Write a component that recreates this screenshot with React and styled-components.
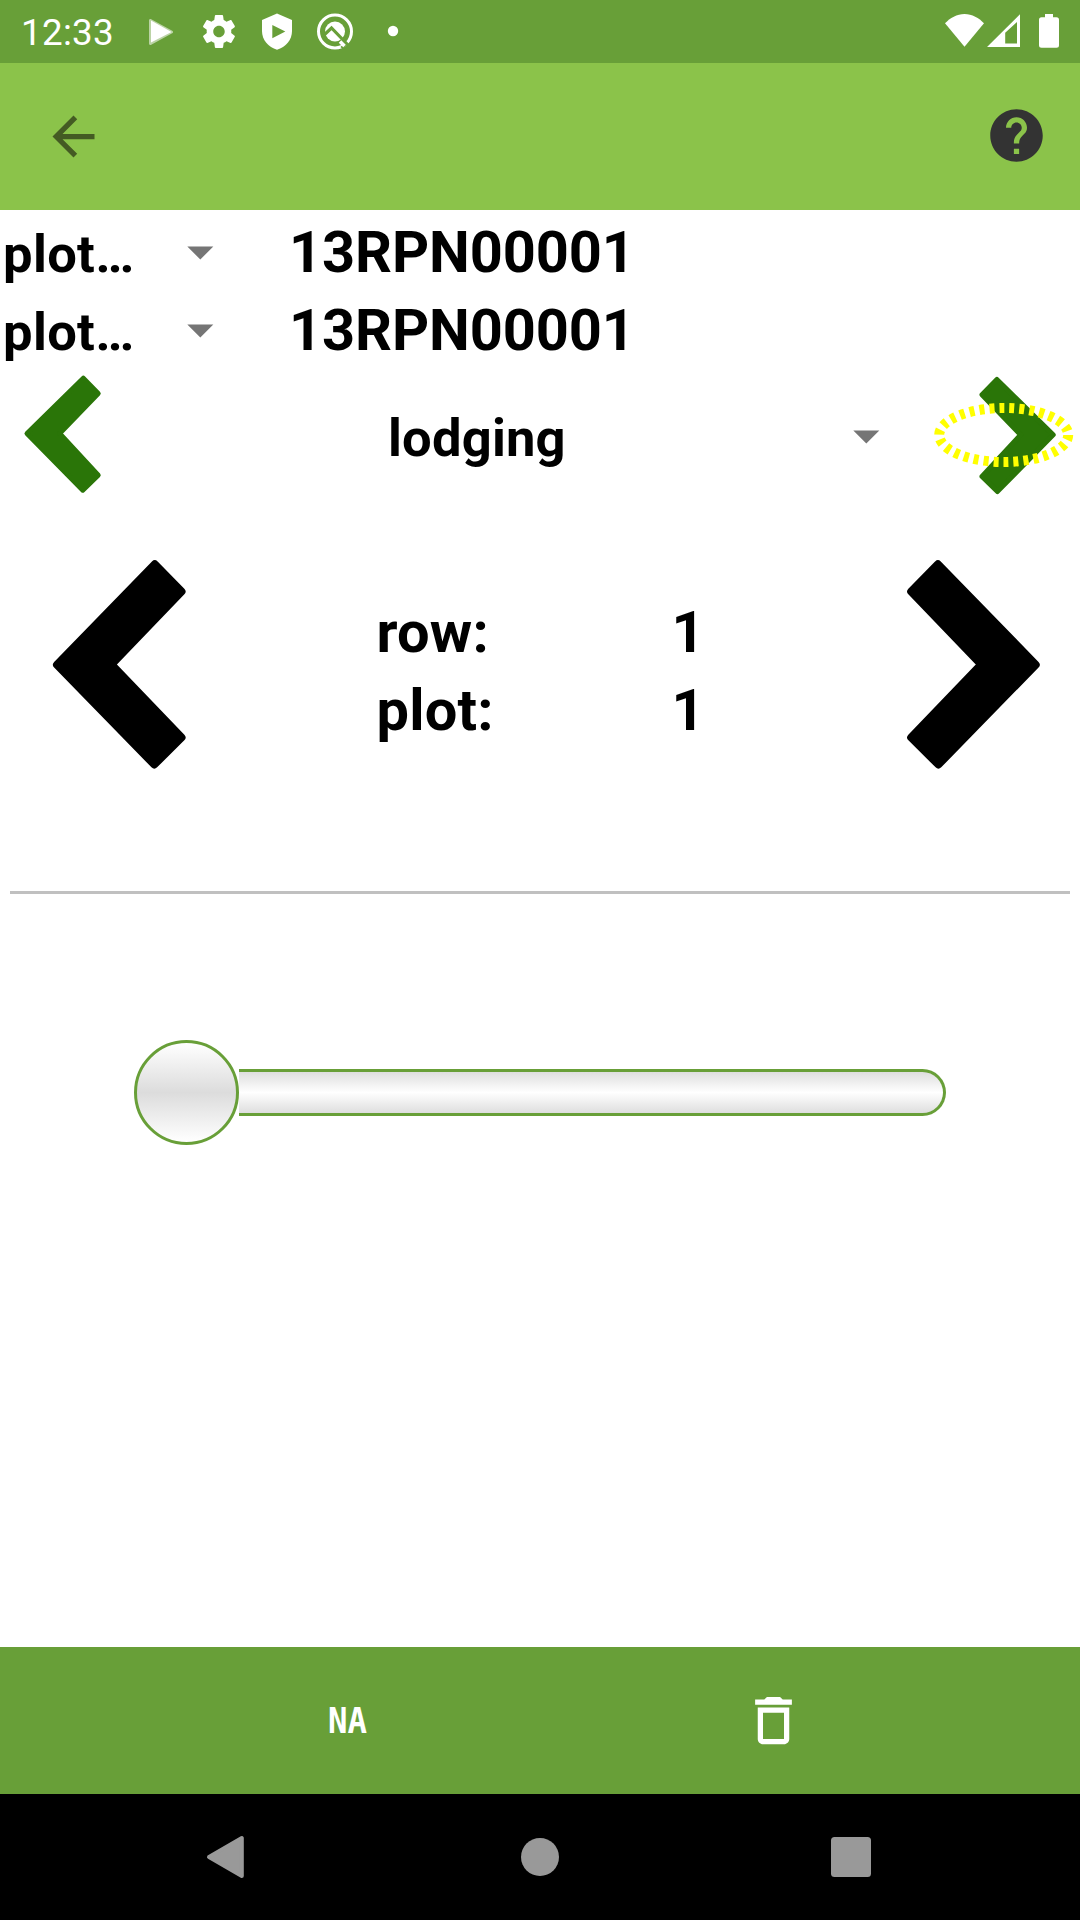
import React from "react";
import styled, { createGlobalStyle } from "styled-components";

const GlobalStyle = createGlobalStyle`
  * { box-sizing: border-box; }
  html, body { margin: 0; background: #fff; }
  svg { display: block; flex: none; }
`;

const Screen = styled.div`
  width: 1080px;
  height: 1920px;
  display: flex;
  flex-direction: column;
  background: #fff;
  color: #000;
  font-family: Roboto, "Liberation Sans", sans-serif;
  overflow: hidden;
`;

const StatusBar = styled.header`
  height: 63px;
  flex: none;
  display: flex;
  align-items: center;
  justify-content: space-between;
  padding: 0 21px 0 21px;
  background: #689f38;
  color: #fff;
`;

const StatusGroup = styled.div`
  display: flex;
  align-items: center;
  height: 63px;
`;

const Clock = styled.span`
  width: 118px;
  padding-top: 2px;
  font-size: 36.75px;
  letter-spacing: 0.3px;
  line-height: 66px;
`;

const Toolbar = styled.nav`
  height: 147px;
  flex: none;
  display: flex;
  align-items: center;
  justify-content: space-between;
  padding: 0 32px 0 42px;
  background: #8bc34a;
`;

const IconButton = styled.button`
  display: flex;
  align-items: center;
  justify-content: center;
  padding: 0 0 ${(p) => p.$lift || 0}px;
  border: 0;
  background: none;
  color: ${(p) => p.$color || "#fff"};
`;

const InfoRow = styled.div`
  height: 78px;
  flex: none;
  display: grid;
  grid-template-columns: 187px 102px 1fr;
  align-items: baseline;
`;

const InfoLabel = styled.span`
  padding-left: 3px;
  font-size: 52.5px;
  font-weight: 700;
  letter-spacing: 0.35px;
  line-height: 70px;
`;

const InfoValue = styled.span`
  font-size: 57.75px;
  font-weight: 700;
  letter-spacing: -0.1px;
  line-height: 85px;
`;

const CaretSlot = styled.span`
  align-self: start;
  padding-top: 36px;
`;

const TraitRow = styled.div`
  position: relative;
  height: 144px;
  flex: none;
  display: flex;
  align-items: center;
  padding: 0 20px;
`;

const TraitName = styled.span`
  width: 362px;
  margin-left: 286px;
  flex: none;
  font-size: 52.5px;
  font-weight: 700;
  letter-spacing: 0.2px;
  line-height: 144px;
`;

const TraitCaret = styled.span`
  width: 229px;
  flex: none;
  padding: 0 0 2px 103px;
`;

const Highlight = styled.svg`
  position: absolute;
  left: 932px;
  top: 35px;
`;

const PlotPanel = styled.section`
  height: 381px;
  flex: none;
  display: flex;
  justify-content: space-between;
  padding: 45px 36px 0 48px;
`;

const PlotGrid = styled.div`
  display: grid;
  grid-template-columns: 295px 60px;
  grid-auto-rows: 78px;
  align-content: start;
  padding-top: 38px;
  margin-left: 16px;
  font-size: 57.75px;
  font-weight: 700;
  letter-spacing: 0.2px;
  line-height: 78px;
`;

const Divider = styled.hr`
  width: 1060px;
  height: 3px;
  flex: none;
  margin: 0 10px;
  border: 0;
  background: #c0c0c0;
`;

const SliderArea = styled.div`
  flex: 1;
  display: flex;
  align-items: flex-start;
  padding: 146px 134px 0;
`;

const Slider = styled.div`
  width: 812px;
  display: flex;
  align-items: center;
`;

const Thumb = styled.div`
  width: 105px;
  height: 105px;
  flex: none;
  border: 3px solid #689f38;
  border-radius: 50%;
  background: linear-gradient(#fff, #dcdcdc 50%, #fff);
`;

const Track = styled.div`
  flex: 1;
  height: 47px;
  border: 3px solid #689f38;
  border-left: 0;
  border-radius: 0 23.5px 23.5px 0;
  background: linear-gradient(#dedede, #fff 50%, #dedede);
`;

const ActionBar = styled.div`
  height: 147px;
  flex: none;
  display: flex;
  align-items: center;
  padding-left: 316px;
  gap: 363px;
  background: #689f38;
`;

const NaLabel = styled.span`
  width: 63px;
  text-align: center;
  font-family: "DejaVu Sans Mono", monospace;
  font-size: 36px;
  font-weight: 700;
  line-height: 63px;
  letter-spacing: 0;
  transform: scaleX(0.9);
`;

const NavBar = styled.footer`
  height: 126px;
  flex: none;
  display: grid;
  grid-template-columns: 72px 72px 72px;
  justify-content: center;
  column-gap: 239px;
  align-items: center;
  background: #000;
`;

const Caret = () => (
  <svg width="27" height="14" viewBox="0 0 27 14">
    <path d="M.3.5h26L13.3 13.5z" fill="#757575" />
  </svg>
);

const GreenChevron = ({ right }) => (
  <svg width="82" height="130" viewBox="20 373 82 130">
    <polygon
      points="27,433.5 83.3,378.2 98.2,393.5 59.6,433.5 98.2,475.2 82.8,490.2"
      transform={right ? "translate(121.2 1.3) scale(-1 1)" : undefined}
      fill="#2a7508"
      stroke="#2a7508"
      strokeWidth="5"
      strokeLinejoin="round"
    />
  </svg>
);

const BlackChevron = ({ right }) => (
  <svg width="142" height="220" viewBox="48 555 142 220">
    <polygon
      points="57,664.7 154.8,564.3 181.5,591.5 111.4,664.5 181.5,737.5 154.3,764.5"
      transform={right ? "translate(238.7 0) scale(-1 1)" : undefined}
      fill="#000"
      stroke="#000"
      strokeWidth="8"
      strokeLinejoin="round"
    />
  </svg>
);

const StatusIcons = () => (
  <svg width="260" height="63" viewBox="139 0 260 63" fill="#fff">
    <path d="M150.5 20.5v23L171.5 32z" fill="#fff" stroke="#fff" strokeWidth="3" strokeLinejoin="round" opacity=".55" />
    <path d="M151 20.5v22L171.5 32z" />
    <g transform="translate(199.3 11.8) scale(1.64)">
      <path d="M19.43 12.98c.04-.32.07-.64.07-.98s-.03-.66-.07-.98l2.11-1.65c.19-.15.24-.42.12-.64l-2-3.46c-.12-.22-.39-.3-.61-.22l-2.49 1c-.52-.4-1.08-.73-1.69-.98l-.38-2.65C14.46 2.18 14.25 2 14 2h-4c-.25 0-.46.18-.49.42l-.38 2.65c-.61.25-1.17.59-1.69.98l-2.49-1c-.23-.09-.49 0-.61.22l-2 3.46c-.13.22-.07.49.12.64l2.11 1.65c-.04.32-.07.65-.07.98s.03.66.07.98l-2.11 1.65c-.19.15-.24.42-.12.64l2 3.46c.12.22.39.3.61.22l2.49-1c.52.4 1.08.73 1.69.98l.38 2.65c.03.24.24.42.49.42h4c.25 0 .46-.18.49-.42l.38-2.65c.61-.25 1.17-.59 1.69-.98l2.49 1c.23.09.49 0 .61-.22l2-3.46c.12-.22.07-.49-.12-.64l-2.11-1.65zM12 15.5c-1.93 0-3.5-1.57-3.5-3.5s1.57-3.5 3.5-3.5 3.5 1.57 3.5 3.5-1.57 3.5-3.5 3.5z" />
    </g>
    <path d="M277 13.5l15 6.6v11c0 9-6.3 16.3-15 18.6c-8.7-2.3-15-9.6-15-18.6v-11z" />
    <path d="M272.3 25v13.3L285.3 31.6z" fill="#689f38" />
    <circle cx="335" cy="31.5" r="16.5" fill="none" stroke="#fff" strokeWidth="3" />
    <circle cx="335" cy="31.5" r="10" />
    <path d="M324 35l7.5-7L348 45" fill="none" stroke="#689f38" strokeWidth="3.2" />
    <path d="M341.5 48l5-5" stroke="#689f38" strokeWidth="3" />
    <path d="M340 41.5l4.5 4.5" stroke="#fff" strokeWidth="3.6" />
    <circle cx="393" cy="31" r="5.2" />
  </svg>
);

const SystemIcons = () => (
  <svg width="116" height="63" viewBox="943 0 116 63" fill="#fff">
    <path d="M945 23.3C950 18 957 14 964.5 14s14.5 4 19.5 9.3L964.5 46.700z" />
    <path fillRule="evenodd" d="M987 47L1020 14.3V47zM1005.2 32.7V43.5H1017V22z" />
    <path d="M1045 14h8v3.200h3.500q2.500 0 2.500 2.500V45.300q0 2.500-2.500 2.500h-15q-2.500 0-2.500-2.500V19.700q0-2.500 2.500-2.500h3.500z" />
  </svg>
);

const MaterialIcon = ({ d }) => (
  <svg width="63" height="63" viewBox="0 0 24 24" fill="currentColor">
    <path d={d} />
  </svg>
);

const BACK = "M20 11H7.83l5.59-5.59L12 4l-8 8 8 8 1.41-1.41L7.83 13H20v-2z";
const HELP =
  "M12 2C6.48 2 2 6.48 2 12s4.48 10 10 10 10-4.48 10-10S17.52 2 12 2zm1 17h-2v-2h2v2zm2.07-7.75l-.9.92C13.45 12.9 13 13.5 13 15h-2v-.5c0-1.1.45-2.1 1.17-2.83l1.24-1.26c.37-.36.59-.86.59-1.41 0-1.1-.9-2-2-2s-2 .9-2 2H8c0-2.21 1.79-4 4-4s4 1.79 4 4c0 .88-.36 1.68-.93 2.25z";
const TRASH =
  "M6 19c0 1.1.9 2 2 2h8c1.1 0 2-.9 2-2V7H6v12zM8 9h8v10H8V9zm7.5-5l-1-1h-5l-1 1H5v2h14V4z";

const PLOTS = ["13RPN00001", "13RPN00001"];
const POSITION = [
  ["row:", "1"],
  ["plot:", "1"],
];

export default function App() {
  return (
    <Screen>
      <GlobalStyle />
      <StatusBar>
        <StatusGroup>
          <Clock>12:33</Clock>
          <StatusIcons />
        </StatusGroup>
        <SystemIcons />
      </StatusBar>
      <Toolbar>
        <IconButton $color="#445b23" aria-label="Back">
          <MaterialIcon d={BACK} />
        </IconButton>
        <IconButton $color="#333" $lift={2} aria-label="Help">
          <MaterialIcon d={HELP} />
        </IconButton>
      </Toolbar>
      {PLOTS.map((value, i) => (
        <InfoRow key={i}>
          <InfoLabel>plot…</InfoLabel>
          <CaretSlot>
            <Caret />
          </CaretSlot>
          <InfoValue>{value}</InfoValue>
        </InfoRow>
      ))}
      <TraitRow>
        <GreenChevron />
        <TraitName>lodging</TraitName>
        <TraitCaret>
          <Caret />
        </TraitCaret>
        <GreenChevron right />
        <Highlight width="144" height="68" viewBox="932 401 144 68">
          <ellipse cx="1003.7" cy="435" rx="64.5" ry="27" fill="none" stroke="#ff0" strokeWidth="10" strokeDasharray="5 5" />
        </Highlight>
      </TraitRow>
      <PlotPanel>
        <BlackChevron />
        <PlotGrid>
          {POSITION.map(([label, value]) => (
            <React.Fragment key={label}>
              <span>{label}</span>
              <span>{value}</span>
            </React.Fragment>
          ))}
        </PlotGrid>
        <BlackChevron right />
      </PlotPanel>
      <Divider />
      <SliderArea>
        <Slider>
          <Thumb />
          <Track />
        </Slider>
      </SliderArea>
      <ActionBar>
        <IconButton>
          <NaLabel>NA</NaLabel>
        </IconButton>
        <IconButton aria-label="Delete">
          <MaterialIcon d={TRASH} />
        </IconButton>
      </ActionBar>
      <NavBar>
        <svg width="72" height="72" viewBox="0 0 72 72">
          <path d="M16 36L48.8 17v38z" fill="#999" stroke="#999" strokeWidth="4" strokeLinejoin="round" />
        </svg>
        <svg width="72" height="72" viewBox="0 0 72 72">
          <circle cx="36" cy="36" r="19" fill="#999" />
        </svg>
        <svg width="72" height="72" viewBox="0 0 72 72">
          <rect x="16" y="16" width="40" height="40" rx="3.5" fill="#999" />
        </svg>
      </NavBar>
    </Screen>
  );
}
